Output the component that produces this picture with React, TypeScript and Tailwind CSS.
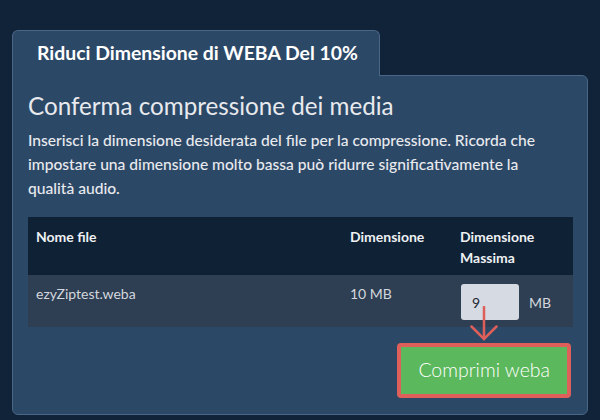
export default function App() {
  return (
    <div className="h-[420px] w-[600px] overflow-hidden bg-[#112339] px-3 pt-[30px] font-['Lato','Liberation_Sans',sans-serif]">
      <div className="relative">
        {/* tab */}
        <div className="relative z-10 -mb-px w-[368px] rounded-t-md border border-b-0 border-[#4a6585] bg-[#2c4867] pt-[12px] pb-[13px] pl-6">
          <h1 className="text-[19.4px] font-bold leading-[20px] text-white">
            Riduci Dimensione di WEBA Del 10%
          </h1>
        </div>
        {/* body */}
        <div className="h-[340px] rounded-b-md rounded-tr-md border border-[#4a6585] bg-[#2c4867] px-[15px] pt-[15px]">
          <h2 className="text-[24.2px] leading-[30px] text-[#e8eaee]">
            Conferma compressione dei media
          </h2>
          <p className="mt-[7px] w-[530px] text-[15.6px] leading-[24px] font-medium text-[#e8eaee]">
            Inserisci la dimensione desiderata del file per la compressione. Ricorda che impostare una dimensione molto bassa può ridurre significativamente la qualità audio.
          </p>
          <table className="mt-[17px] w-[545px] table-fixed border-collapse text-[14px]">
            <colgroup>
              <col className="w-[313px]" />
              <col className="w-[110px]" />
              <col className="w-[122px]" />
            </colgroup>
            <thead>
              <tr className="h-[58px] bg-[#0f2235] align-top text-left font-bold text-[#eef0f3]">
                <th className="px-[8px] pt-[9px] leading-[21px]">Nome file</th>
                <th className="px-[9px] pt-[9px] leading-[21px]">Dimensione</th>
                <th className="px-[9px] pt-[9px] leading-[21px]">
                  Dimensione
                  <br />
                  Massima
                </th>
              </tr>
            </thead>
            <tbody>
              <tr className="h-[52px] bg-[#2e3e53] align-top text-[#d3d7dd]">
                <td className="px-[8px] pt-[9px] leading-[20px]">ezyZiptest.weba</td>
                <td className="px-[9px] pt-[9px] leading-[20px]">10 MB</td>
                <td className="pl-[10px] pt-[9px]">
                  <div className="relative flex items-center gap-[10px]">
                    <div className="flex h-[36px] w-[58px] items-center rounded-[3px] bg-[#d6dae2] pl-[11px] text-[14px] text-[#1d2633]">
                      9
                    </div>
                    <span className="text-[14px] text-[#d3d7dd]">MB</span>
                    <svg
                      className="absolute left-[9px] top-[22px]"
                      width="30"
                      height="36"
                      viewBox="0 0 30 36"
                      fill="none"
                      stroke="#de5f59"
                      strokeWidth="2.5"
                      strokeLinecap="round"
                    >
                      <line x1="14" y1="1" x2="14" y2="33" />
                      <polyline points="1.5,20.5 14,33 26.5,20.5" />
                    </svg>
                  </div>
                </td>
              </tr>
            </tbody>
          </table>
          <div className="mt-[16px] flex justify-end pr-[1px]">
            <button className="rounded-[4px] border-[4px] border-[#df605a] bg-[#5cb85c] px-[17px] pt-[10px] pb-[11px] text-[19.5px] leading-[26px] font-light text-white">
              Comprimi weba
            </button>
          </div>
        </div>
      </div>
    </div>
  );
}
